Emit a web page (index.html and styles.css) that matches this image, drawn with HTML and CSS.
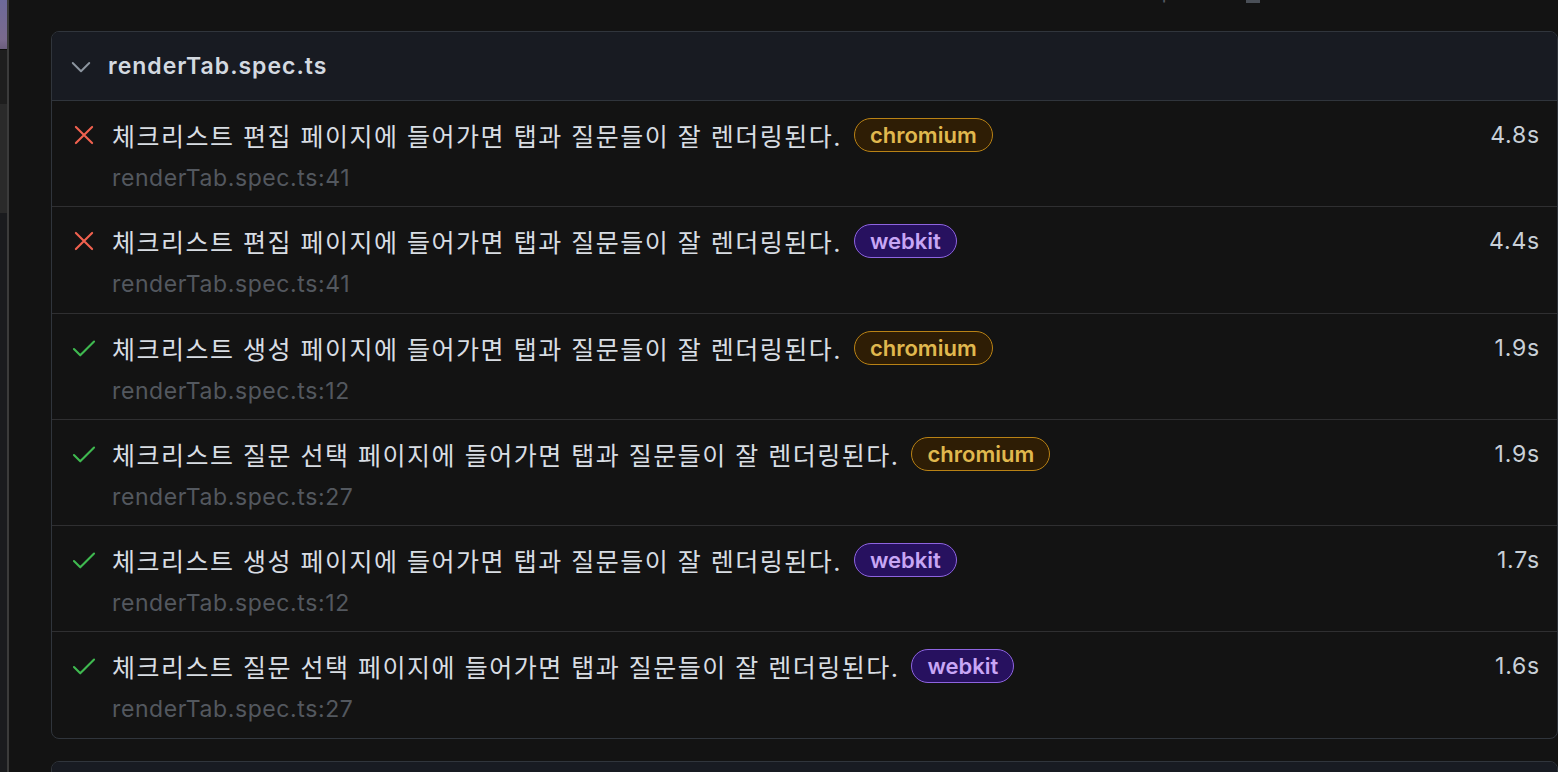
FILE: index.html
```html
<!DOCTYPE html>
<html lang="ko">
<head>
<meta charset="utf-8">
<title>renderTab.spec.ts</title>
<link rel="stylesheet" href="styles.css">
</head>
<body>
<div class="side">
  <div class="side-photo"></div>
  <div class="side-a"></div>
  <div class="side-b"></div>
  <div class="side-c"></div>
</div>
<main class="main">
  <div class="topline">
    <div class="topline-inner">
      <span>2024. 10. 30. 오후 3:13</span>
      <span class="cal"></span>
      <span>3:13:55</span>
      <span>Total time: 11.5s</span>
    </div>
  </div>

  <section class="card">
    <div class="card-head">
      <svg class="chev" viewBox="0 0 16 16" width="24" height="24"><path d="M2.5 6l5.5 5.5L13.5 6" fill="none" stroke="#8b949e" stroke-width="1.3" stroke-linecap="round" stroke-linejoin="round"/></svg>
      <span class="file">renderTab.spec.ts</span>
    </div>

    <div class="row">
      <svg class="ico" viewBox="0 0 16 16" width="24" height="24"><path d="M2.6 2.6l10.8 10.8M13.4 2.6L2.6 13.4" stroke="#f0614f" stroke-width="1.4" stroke-linecap="round"/></svg>
      <div class="body">
        <div class="title"><span class="name">체크리스트 편집 페이지에 들어가면 탭과 질문들이 잘 렌더링된다.</span><span class="tag chromium">chromium</span></div>
        <div class="loc">renderTab.spec.ts:41</div>
      </div>
      <div class="dur">4.8s</div>
    </div>

    <div class="row">
      <svg class="ico" viewBox="0 0 16 16" width="24" height="24"><path d="M2.6 2.6l10.8 10.8M13.4 2.6L2.6 13.4" stroke="#f0614f" stroke-width="1.4" stroke-linecap="round"/></svg>
      <div class="body">
        <div class="title"><span class="name">체크리스트 편집 페이지에 들어가면 탭과 질문들이 잘 렌더링된다.</span><span class="tag webkit">webkit</span></div>
        <div class="loc">renderTab.spec.ts:41</div>
      </div>
      <div class="dur">4.4s</div>
    </div>

    <div class="row">
      <svg class="ico" viewBox="0 0 16 16" width="24" height="24"><path d="M1.3 8.7l4.2 4.2 9.2-9.2" fill="none" stroke="#3fb950" stroke-width="1.4" stroke-linecap="round" stroke-linejoin="round"/></svg>
      <div class="body">
        <div class="title"><span class="name">체크리스트 생성 페이지에 들어가면 탭과 질문들이 잘 렌더링된다.</span><span class="tag chromium">chromium</span></div>
        <div class="loc">renderTab.spec.ts:12</div>
      </div>
      <div class="dur">1.9s</div>
    </div>

    <div class="row">
      <svg class="ico" viewBox="0 0 16 16" width="24" height="24"><path d="M1.3 8.7l4.2 4.2 9.2-9.2" fill="none" stroke="#3fb950" stroke-width="1.4" stroke-linecap="round" stroke-linejoin="round"/></svg>
      <div class="body">
        <div class="title"><span class="name">체크리스트 질문 선택 페이지에 들어가면 탭과 질문들이 잘 렌더링된다.</span><span class="tag chromium">chromium</span></div>
        <div class="loc">renderTab.spec.ts:27</div>
      </div>
      <div class="dur">1.9s</div>
    </div>

    <div class="row">
      <svg class="ico" viewBox="0 0 16 16" width="24" height="24"><path d="M1.3 8.7l4.2 4.2 9.2-9.2" fill="none" stroke="#3fb950" stroke-width="1.4" stroke-linecap="round" stroke-linejoin="round"/></svg>
      <div class="body">
        <div class="title"><span class="name">체크리스트 생성 페이지에 들어가면 탭과 질문들이 잘 렌더링된다.</span><span class="tag webkit">webkit</span></div>
        <div class="loc">renderTab.spec.ts:12</div>
      </div>
      <div class="dur">1.7s</div>
    </div>

    <div class="row">
      <svg class="ico" viewBox="0 0 16 16" width="24" height="24"><path d="M1.3 8.7l4.2 4.2 9.2-9.2" fill="none" stroke="#3fb950" stroke-width="1.4" stroke-linecap="round" stroke-linejoin="round"/></svg>
      <div class="body">
        <div class="title"><span class="name">체크리스트 질문 선택 페이지에 들어가면 탭과 질문들이 잘 렌더링된다.</span><span class="tag webkit">webkit</span></div>
        <div class="loc">renderTab.spec.ts:27</div>
      </div>
      <div class="dur">1.6s</div>
    </div>
  </section>

  <section class="card next">
    <div class="card-head"></div>
  </section>
</main>
</body>
</html>
```

FILE: styles.css
```css
* { box-sizing: border-box; }
html, body {
  margin: 0;
  height: 100%;
  background: #131313;
  overflow: hidden;
}
body {
  display: flex;
  font-family: "Inter", "Noto Sans CJK KR", sans-serif;
  color: #d0d6de;
}
.side {
  width: 9px;
  flex: none;
  display: flex;
  flex-direction: column;
  border-right: 2px solid #3b3b3b;
}
.side-photo { height: 50px; background: linear-gradient(180deg, #6d6a9a, #7a6a8e 80%, #6a5d7c); border-bottom: 1px solid #0c0c0c; }
.side-a { height: 54px; background: #1e1e1e; }
.side-b { height: 109px; background: #2a2a2a; }
.side-c { flex: 1; background: #1a1b1e; }

.main {
  flex: 1;
  padding-left: 42px;
  min-width: 0;
}
.topline {
  height: 31px;
  overflow: hidden;
}
.topline-inner {
  margin-top: -19px;
  display: flex;
  justify-content: flex-end;
  gap: 26px;
  padding-right: 18px;
  font-size: 21px;
  line-height: 24px;
  color: #555a62;
  white-space: nowrap;
}
.cal { width: 14px; height: 22px; border-bottom: 3px solid #4a4f57; }

.card {
  border: 1px solid #30353c;
  border-radius: 8px;
  overflow: hidden;
  background: #131313;
}
.card-head {
  height: 69px;
  background: #181b22;
  border-bottom: 1px solid #30353c;
  display: flex;
  align-items: center;
  padding-left: 17px;
}
.chev { margin-right: 15px; }
.file {
  font-size: 23px;
  font-weight: 600;
  color: #d3d9e0;
  letter-spacing: 1px;
}
.row {
  display: flex;
  align-items: flex-start;
  padding: 16px 17px 12.3px 20px;
  border-bottom: 1px solid #2f2f31;
}
.row:last-child { border-bottom: none; }
.ico { flex: none; margin-top: 6px; margin-right: 16px; }
.body { flex: 1; min-width: 0; }
.title {
  display: flex;
  align-items: center;
  height: 36px;
}
.name {
  font-size: 25px;
  letter-spacing: 1.5px;
  color: #d8dde3;
  white-space: nowrap;
}
.tag {
  margin-left: 12px;
  height: 34px;
  padding: 0 15px;
  border-radius: 17px;
  font-size: 22px;
  font-weight: 600;
  line-height: 32px;
  border: 1px solid;
}
.chromium { background: #2e1d05; border-color: #b98215; color: #e0b84e; }
.webkit { background: #27115f; border-color: #8e64e0; color: #c8a6f5; }
.loc {
  margin-top: 9px;
  height: 32px;
  line-height: 32px;
  font-size: 23px;
  letter-spacing: 0.6px;
  color: #53585f;
}
.dur {
  flex: none;
  line-height: 36px;
  font-size: 23px;
  letter-spacing: 0.8px;
  color: #c9d0d8;
}
.next {
  margin-top: 22px;
  height: 40px;
}
.next .card-head { border-bottom: none; }
```
